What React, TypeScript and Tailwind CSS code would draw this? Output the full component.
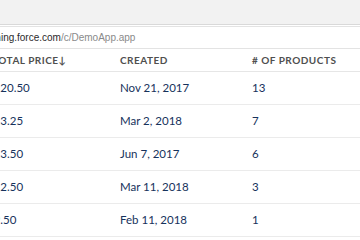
import React from 'react';

const rows = [
  { price: '$120.50', created: 'Nov 21, 2017', count: '13' },
  { price: '$13.25', created: 'Mar 2, 2018', count: '7' },
  { price: '$13.50', created: 'Jun 7, 2017', count: '6' },
  { price: '$12.50', created: 'Mar 11, 2018', count: '3' },
  { price: '$9.50', created: 'Feb 11, 2018', count: '1' },
];

export default function App() {
  return (
    <div className="w-[360px] h-[240px] overflow-hidden bg-white font-['Lato','Liberation_Sans',sans-serif]">
      {/* Browser chrome */}
      <div className="h-[25px] bg-[#f2f2f2] border-b border-[#d9d9d9]" />
      <div className="h-[23px] bg-white border-y border-[#e3e3e3] mt-[1px] flex items-center overflow-hidden">
        <div className="whitespace-nowrap text-[10px] text-[#2b2b2b] ml-[-23px] font-['Liberation_Sans',sans-serif]">
          lightning.force.com<span className="text-[#8a8a8a]">/c/DemoApp.app</span>
        </div>
      </div>

      {/* Table */}
      <div className="h-[23px] flex items-center border-b border-[#e6e6e6] text-[10px] font-bold tracking-[0.5px] text-[#4f4f4f] whitespace-nowrap">
        <div className="w-[120px] shrink-0 ml-[-8px]">
          <span>TOTAL PRICE↓</span>
        </div>
        <div className="w-[132px] shrink-0 ml-[8px]">CREATED</div>
        <div className="shrink-0"># OF PRODUCTS</div>
      </div>
      {rows.map(r => (
        <div
          key={r.created}
          className="h-[33px] flex items-center border-b border-[#ebebeb] text-[11.5px] text-[#16325c] whitespace-nowrap"
        >
          <div className="w-[133px] shrink-0 ml-[-13px]">{r.price}</div>
          <div className="w-[132px] shrink-0">{r.created}</div>
          <div className="shrink-0">{r.count}</div>
        </div>
      ))}
    </div>
  );
}
